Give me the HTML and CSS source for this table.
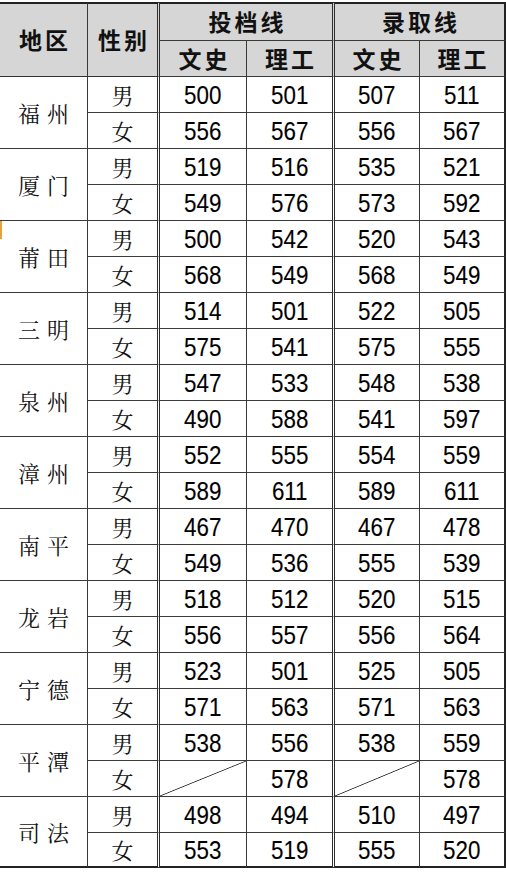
FILE: index.html
```html
<!DOCTYPE html>
<html lang="zh">
<head>
<meta charset="utf-8">
<title>投档线与录取线</title>
<link rel="stylesheet" href="styles.css">
</head>
<body>
<table class="score">
  <colgroup>
    <col class="c-area"><col class="c-sex"><col class="c-a1"><col class="c-a2"><col class="c-b1"><col class="c-b2">
  </colgroup>
  <thead>
    <tr class="h1">
      <th rowspan="2" class="area sep-r">地区</th>
      <th rowspan="2" class="sex dbl">性别</th>
      <th colspan="2" class="grp dbl">投档线</th>
      <th colspan="2" class="grp last">录取线</th>
    </tr>
    <tr class="h2">
      <th class="sub sep-r">文史</th>
      <th class="sub dbl">理工</th>
      <th class="sub sep-r">文史</th>
      <th class="sub last">理工</th>
    </tr>
  </thead>
  <tbody>
    <tr><td rowspan="2" class="area sep-r">福州</td><td class="sex dbl">男</td><td class="num sep-r"><span>500</span></td><td class="num dbl"><span>501</span></td><td class="num sep-r"><span>507</span></td><td class="num last"><span>511</span></td></tr>
    <tr class="end"><td class="sex dbl">女</td><td class="num sep-r"><span>556</span></td><td class="num dbl"><span>567</span></td><td class="num sep-r"><span>556</span></td><td class="num last"><span>567</span></td></tr>

    <tr><td rowspan="2" class="area sep-r">厦门</td><td class="sex dbl">男</td><td class="num sep-r"><span>519</span></td><td class="num dbl"><span>516</span></td><td class="num sep-r"><span>535</span></td><td class="num last"><span>521</span></td></tr>
    <tr class="end"><td class="sex dbl">女</td><td class="num sep-r"><span>549</span></td><td class="num dbl"><span>576</span></td><td class="num sep-r"><span>573</span></td><td class="num last"><span>592</span></td></tr>

    <tr><td rowspan="2" class="area sep-r mark">莆田</td><td class="sex dbl">男</td><td class="num sep-r"><span>500</span></td><td class="num dbl"><span>542</span></td><td class="num sep-r"><span>520</span></td><td class="num last"><span>543</span></td></tr>
    <tr class="end"><td class="sex dbl">女</td><td class="num sep-r"><span>568</span></td><td class="num dbl"><span>549</span></td><td class="num sep-r"><span>568</span></td><td class="num last"><span>549</span></td></tr>

    <tr><td rowspan="2" class="area sep-r">三明</td><td class="sex dbl">男</td><td class="num sep-r"><span>514</span></td><td class="num dbl"><span>501</span></td><td class="num sep-r"><span>522</span></td><td class="num last"><span>505</span></td></tr>
    <tr class="end"><td class="sex dbl">女</td><td class="num sep-r"><span>575</span></td><td class="num dbl"><span>541</span></td><td class="num sep-r"><span>575</span></td><td class="num last"><span>555</span></td></tr>

    <tr><td rowspan="2" class="area sep-r">泉州</td><td class="sex dbl">男</td><td class="num sep-r"><span>547</span></td><td class="num dbl"><span>533</span></td><td class="num sep-r"><span>548</span></td><td class="num last"><span>538</span></td></tr>
    <tr class="end"><td class="sex dbl">女</td><td class="num sep-r"><span>490</span></td><td class="num dbl"><span>588</span></td><td class="num sep-r"><span>541</span></td><td class="num last"><span>597</span></td></tr>

    <tr><td rowspan="2" class="area sep-r">漳州</td><td class="sex dbl">男</td><td class="num sep-r"><span>552</span></td><td class="num dbl"><span>555</span></td><td class="num sep-r"><span>554</span></td><td class="num last"><span>559</span></td></tr>
    <tr class="end"><td class="sex dbl">女</td><td class="num sep-r"><span>589</span></td><td class="num dbl"><span>611</span></td><td class="num sep-r"><span>589</span></td><td class="num last"><span>611</span></td></tr>

    <tr><td rowspan="2" class="area sep-r">南平</td><td class="sex dbl">男</td><td class="num sep-r"><span>467</span></td><td class="num dbl"><span>470</span></td><td class="num sep-r"><span>467</span></td><td class="num last"><span>478</span></td></tr>
    <tr class="end"><td class="sex dbl">女</td><td class="num sep-r"><span>549</span></td><td class="num dbl"><span>536</span></td><td class="num sep-r"><span>555</span></td><td class="num last"><span>539</span></td></tr>

    <tr><td rowspan="2" class="area sep-r">龙岩</td><td class="sex dbl">男</td><td class="num sep-r"><span>518</span></td><td class="num dbl"><span>512</span></td><td class="num sep-r"><span>520</span></td><td class="num last"><span>515</span></td></tr>
    <tr class="end"><td class="sex dbl">女</td><td class="num sep-r"><span>556</span></td><td class="num dbl"><span>557</span></td><td class="num sep-r"><span>556</span></td><td class="num last"><span>564</span></td></tr>

    <tr><td rowspan="2" class="area sep-r">宁德</td><td class="sex dbl">男</td><td class="num sep-r"><span>523</span></td><td class="num dbl"><span>501</span></td><td class="num sep-r"><span>525</span></td><td class="num last"><span>505</span></td></tr>
    <tr class="end"><td class="sex dbl">女</td><td class="num sep-r"><span>571</span></td><td class="num dbl"><span>563</span></td><td class="num sep-r"><span>571</span></td><td class="num last"><span>563</span></td></tr>

    <tr><td rowspan="2" class="area sep-r">平潭</td><td class="sex dbl">男</td><td class="num sep-r"><span>538</span></td><td class="num dbl"><span>556</span></td><td class="num sep-r"><span>538</span></td><td class="num last"><span>559</span></td></tr>
    <tr class="end"><td class="sex dbl">女</td><td class="num sep-r slash"></td><td class="num dbl"><span>578</span></td><td class="num sep-r slash"></td><td class="num last"><span>578</span></td></tr>

    <tr><td rowspan="2" class="area sep-r bottom">司法</td><td class="sex dbl">男</td><td class="num sep-r"><span>498</span></td><td class="num dbl"><span>494</span></td><td class="num sep-r"><span>510</span></td><td class="num last"><span>497</span></td></tr>
    <tr class="end final"><td class="sex dbl">女</td><td class="num sep-r"><span>553</span></td><td class="num dbl"><span>519</span></td><td class="num sep-r"><span>555</span></td><td class="num last"><span>520</span></td></tr>
  </tbody>
</table>
</body>
</html>
```

FILE: styles.css
```css
html, body {
  margin: 0;
  padding: 0;
  background: #ffffff;
}

body {
  padding-top: 2px;
  width: 506px;
}

.score {
  border-collapse: separate;
  border-spacing: 0;
  table-layout: fixed;
  width: 506px;
  color: #111111;
  font-family: "Noto Sans CJK SC", "Noto Sans", sans-serif;
}

.c-area { width: 88px; }
.c-sex { width: 72px; }
.c-a1 { width: 87px; }
.c-a2 { width: 88px; }
.c-b1 { width: 85px; }
.c-b2 { width: 86px; }

.score th,
.score td {
  box-sizing: border-box;
  padding: 0;
  text-align: center;
  vertical-align: middle;
  border-bottom: 1px solid #3a3a3a;
  line-height: 1;
  white-space: nowrap;
  overflow: hidden;
}

.sep-r { border-right: 1px solid #3a3a3a; }
.dbl { border-right: 3px double #2e2e2e; }
.last { border-right: 2px solid #222222; }

/* header */
.score thead th {
  background: #d6d6d6;
  font-weight: 700;
  font-size: 23px;
  letter-spacing: 3px;
  text-indent: 3px;
}

.h1 th {
  border-top: 2px solid #222222;
  height: 39px;
}

.h2 th {
  height: 36px;
}

.h1 .grp {
  padding-bottom: 2px;
}

.score thead th.area,
.score thead th.sex {
  border-bottom: 1px solid #333333;
  padding-bottom: 2px;
}

/* body */
.score tbody tr {
  height: 36px;
}

.score tbody tr.final {
  height: 35px;
}

.score tbody tr.final td,
.score td.bottom {
  border-bottom: 2px solid #222222;
}

.score td.area {
  font-size: 22px;
  letter-spacing: 7px;
  text-indent: 7px;
  font-family: "Noto Serif CJK SC", "Noto Sans CJK SC", serif;
  font-weight: 400;
}

.score td.sex {
  font-size: 22px;
  font-family: "Noto Serif CJK SC", "Noto Sans CJK SC", serif;
  font-weight: 400;
}

.score td.num {
  font-family: "Liberation Sans", Arial, sans-serif;
  font-size: 26px;
  color: #000000;
}

.score td.num span {
  display: inline-block;
  transform: scaleX(0.86);
  -webkit-text-stroke: 0.12px #000000;
}

.score td.slash {
  background: linear-gradient(to bottom right,
    transparent calc(50% - 0.8px),
    #2a2a2a 50%,
    transparent calc(50% + 0.8px));
}

.mark {
  position: relative;
}

.mark::before {
  content: "";
  position: absolute;
  left: 0;
  top: -4px;
  width: 2px;
  height: 22px;
  background: #e9a23b;
}
```
